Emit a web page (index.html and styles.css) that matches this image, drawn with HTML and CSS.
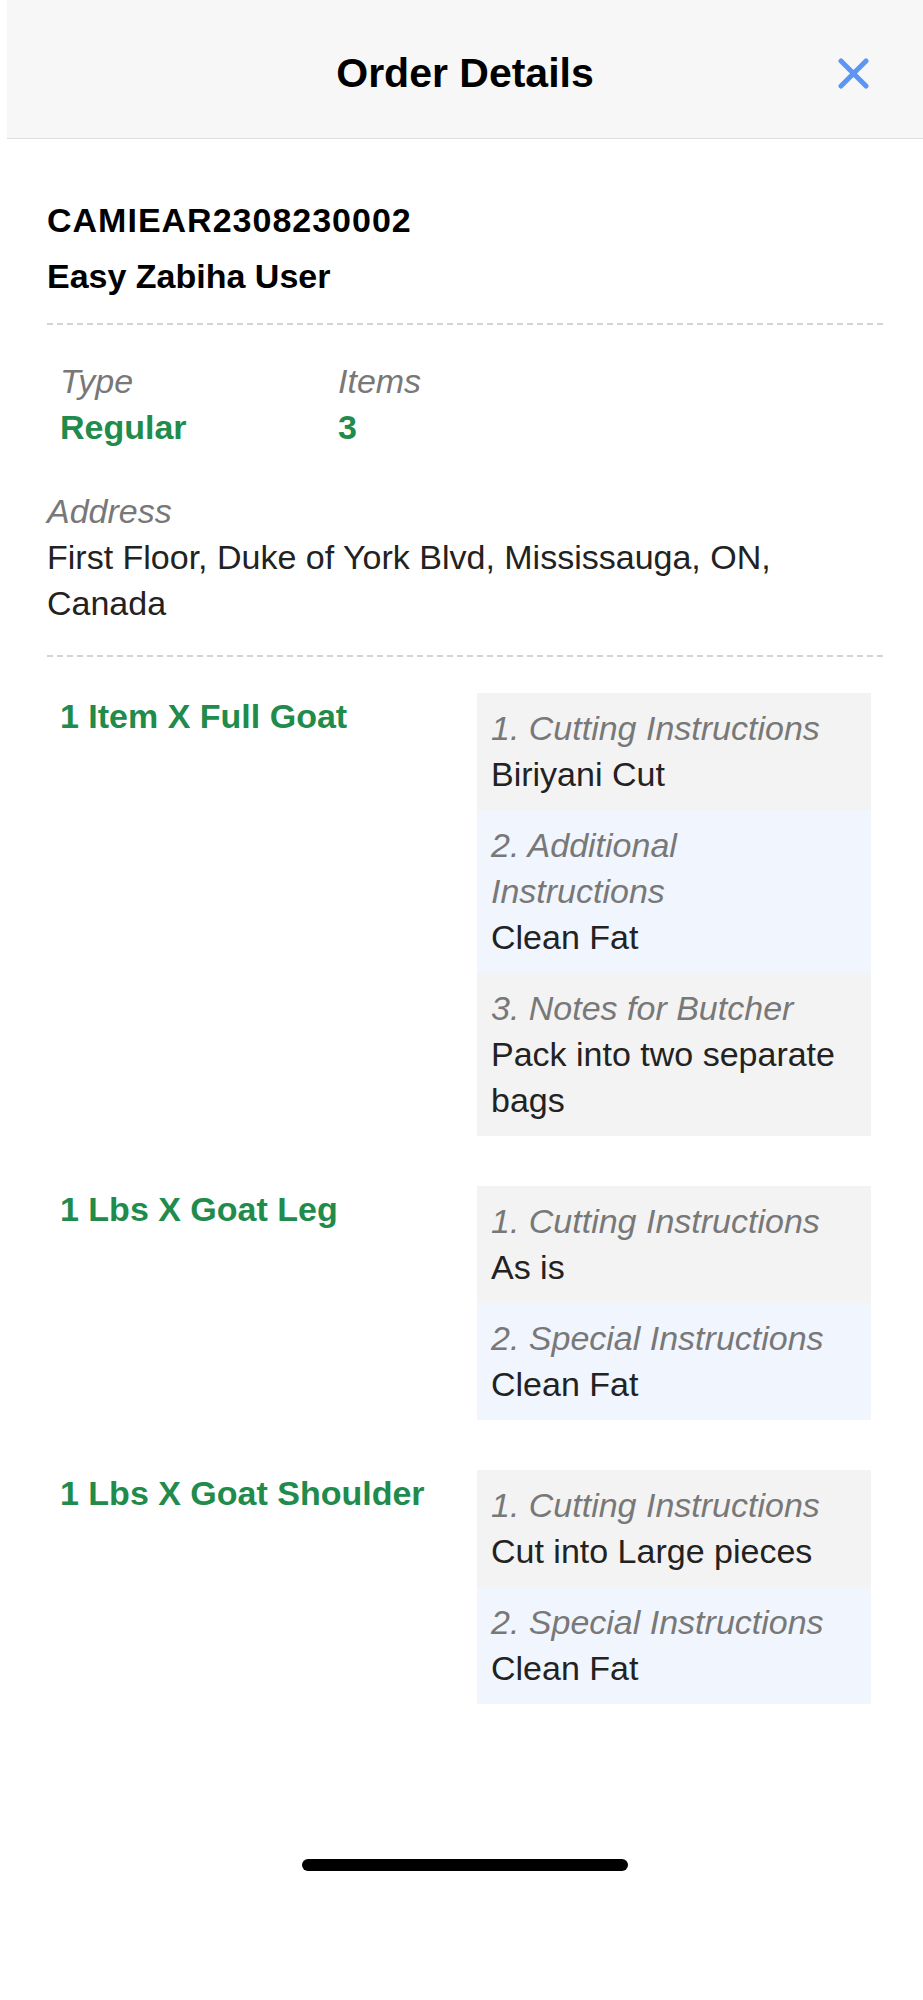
FILE: index.html
```html
<!DOCTYPE html>
<html lang="en">
  <head>
    <meta charset="UTF-8" />
    <meta name="viewport" content="width=device-width, initial-scale=1.0" />
    <title>Order Details</title>
    <link rel="stylesheet" href="styles.css">
  </head>
  <body>
    <header class="topbar">
      <span></span>
      <h1>Order Details</h1>
      <button class="close" aria-label="Close">
        <svg width="31" height="31" viewBox="0 0 31 31">
          <path d="M3 3 L28 28 M28 3 L3 28" />
        </svg>
      </button>
    </header>

    <main class="content">
      <div class="order-id">CAMIEAR2308230002</div>
      <div class="customer">Easy Zabiha User</div>

      <div class="divider"></div>

      <div class="meta">
        <div>
          <div class="label">Type</div>
          <div class="value">Regular</div>
        </div>
        <div>
          <div class="label">Items</div>
          <div class="value">3</div>
        </div>
      </div>

      <div class="address">
        <div class="label">Address</div>
        <div class="text">First Floor, Duke of York Blvd, Mississauga, ON, Canada</div>
      </div>

      <div class="divider"></div>

      <div class="items">
        <div class="item">
          <div class="item-name">1 Item X Full Goat</div>
          <div class="notes">
            <div class="note">
              <div class="label">1. Cutting Instructions</div>
              <div class="text">Biriyani Cut</div>
            </div>
            <div class="note">
              <div class="label">2. Additional Instructions</div>
              <div class="text">Clean Fat</div>
            </div>
            <div class="note">
              <div class="label">3. Notes for Butcher</div>
              <div class="text">Pack into two separate bags</div>
            </div>
          </div>
        </div>

        <div class="item">
          <div class="item-name">1 Lbs X Goat Leg</div>
          <div class="notes">
            <div class="note">
              <div class="label">1. Cutting Instructions</div>
              <div class="text">As is</div>
            </div>
            <div class="note">
              <div class="label">2. Special Instructions</div>
              <div class="text">Clean Fat</div>
            </div>
          </div>
        </div>

        <div class="item">
          <div class="item-name">1 Lbs X Goat Shoulder</div>
          <div class="notes">
            <div class="note">
              <div class="label">1. Cutting Instructions</div>
              <div class="text">Cut into Large pieces</div>
            </div>
            <div class="note">
              <div class="label">2. Special Instructions</div>
              <div class="text">Clean Fat</div>
            </div>
          </div>
        </div>
      </div>
    </main>

    <div class="home">
      <span class="home-bar"></span>
    </div>
  </body>
</html>
```

FILE: styles.css
```css
body {
  margin: 0;
  background: #fff;
  font-family: "Liberation Sans", Arial, sans-serif;
  color: #222;
}

/* header bar */
.topbar {
  display: grid;
  grid-template-columns: 1fr auto 1fr;
  align-items: center;
  box-sizing: border-box;
  height: 139px;
  margin-left: 7px;
  padding-top: 8px;
  background: #f7f7f7;
  border-bottom: 1px solid #dedede;
}
.topbar h1 {
  margin: 0;
  font-size: 41px;
  line-height: 46px;
  font-weight: bold;
  color: #000;
}
.close {
  justify-self: end;
  margin-right: 54px;
  padding: 0;
  border: none;
  background: none;
  line-height: 0;
  cursor: pointer;
}
.close path {
  fill: none;
  stroke: #5b96f5;
  stroke-width: 5;
  stroke-linecap: round;
}

.content {
  padding: 0 40px 0 47px;
}

.order-id,
.customer {
  font-size: 34px;
  line-height: 46px;
  font-weight: bold;
  color: #000;
}
.order-id {
  margin-top: 58px;
  letter-spacing: 1px;
}
.customer {
  margin-top: 10px;
}

.divider {
  height: 2px;
  margin-top: 24px;
  background-image: linear-gradient(to right, #d4d4d4 6px, transparent 6px);
  background-size: 10px 2px;
}

.label {
  font-size: 34px;
  line-height: 46px;
  font-style: italic;
  color: #787878;
}
.text {
  font-size: 34px;
  line-height: 46px;
  color: #222;
}

.meta {
  display: grid;
  grid-template-columns: 278px 1fr;
  margin-top: 33px;
  padding-left: 13px;
}
.value {
  font-size: 34px;
  line-height: 46px;
  font-weight: bold;
  color: #218b4b;
}

.address {
  margin-top: 38px;
}
.address + .divider {
  margin-top: 29px;
}

/* ordered items */
.items {
  display: flex;
  flex-direction: column;
  gap: 50px;
  margin-top: 36px;
  padding: 0 12px 0 13px;
}
.item {
  display: grid;
  grid-template-columns: 1fr 394px;
  align-items: start;
}
.item-name {
  font-size: 34px;
  line-height: 46px;
  font-weight: bold;
  color: #218b4b;
}
.note {
  padding: 12px 24px 13px 14px;
  background: #f3f3f3;
}
.note:nth-child(even) {
  background: #f1f5fd;
}

.home {
  display: flex;
  justify-content: center;
  margin-top: 155px;
  padding: 0 0 40px 7px;
}
.home-bar {
  width: 326px;
  height: 12px;
  border-radius: 6px;
  background: #000;
}
```
